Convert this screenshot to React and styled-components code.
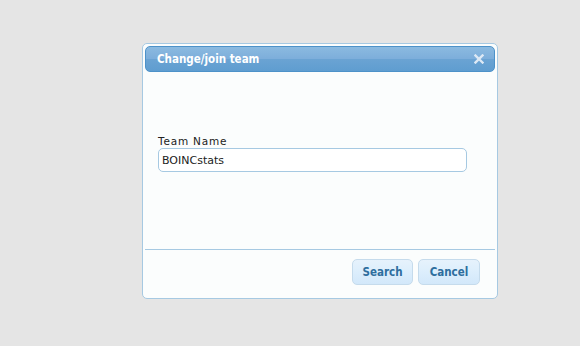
import React from "react";
import styled, { createGlobalStyle } from "styled-components";

const Global = createGlobalStyle`
  html, body { margin: 0; padding: 0; }
  body { background: #e5e5e5; width: 580px; height: 346px; overflow: hidden; font-family: "DejaVu Sans", Verdana, sans-serif; }
`;

const Page = styled.div`
  padding: 43px 0 0 142px;
`;

const Dialog = styled.div`
  box-sizing: border-box;
  width: 356px;
  height: 256px;
  border: 1px solid #a6c9e2;
  border-radius: 5px;
  background: #fbfdfd;
  padding: 2px;
  display: flex;
  flex-direction: column;
`;

const TitleBar = styled.div`
  box-sizing: border-box;
  height: 26px;
  border: 1px solid #4d92c9;
  border-radius: 5px;
  background: linear-gradient(to bottom, #8bbae0 0%, #7daedb 48%, #6aa3d3 52%, #5f9dd0 100%);
  display: flex;
  align-items: center;
  justify-content: space-between;
  padding: 0 10px 0 11px;
`;

const Title = styled.span`
  color: #ffffff;
  font-family: "DejaVu Sans Condensed", "DejaVu Sans", sans-serif;
  font-weight: bold;
  font-size: 11.5px;
`;

const Close = styled.svg`
  width: 10px;
  height: 10px;
`;

const Content = styled.div`
  flex: 1;
  padding: 63px 0 0 13px;
  display: flex;
  flex-direction: column;
`;

const Label = styled.label`
  font-size: 10.5px;
  color: #222;
  letter-spacing: 0.8px;
  line-height: 12px;
  margin-bottom: 1px;
`;

const Input = styled.input`
  box-sizing: border-box;
  width: 309px;
  height: 24px;
  border: 1px solid #a6c9e2;
  border-radius: 5px;
  background: #fff;
  font-family: "DejaVu Sans", Verdana, sans-serif;
  font-size: 11px;
  color: #222;
  padding: 0 0 0 3px;
  outline: none;
`;

const ButtonPane = styled.div`
  border-top: 1px solid #a6c9e2;
  display: flex;
  justify-content: flex-end;
  gap: 5px;
  padding: 9px 15px 11px 0;
`;

const Button = styled.button`
  box-sizing: border-box;
  width: ${(p) => p.w}px;
  height: 26px;
  border: 1px solid #c5dbec;
  border-radius: 5px;
  background: linear-gradient(to bottom, #e6f2fc 0%, #dceefc 50%, #d2e8fa 100%);
  color: #2e6e9e;
  font-family: "DejaVu Sans Condensed", "DejaVu Sans", sans-serif;
  font-weight: bold;
  font-size: 11.5px;
  padding: 0;
  cursor: pointer;
`;

export default function App() {
  return (
    <>
      <Global />
      <Page>
        <Dialog>
          <TitleBar>
            <Title>Change/join team</Title>
            <Close viewBox="0 0 10 10">
              <path d="M1.5 1.5 L8.5 8.5 M8.5 1.5 L1.5 8.5" stroke="#dde9f5" strokeWidth="2.4" strokeLinecap="square" />
            </Close>
          </TitleBar>
          <Content>
            <Label>Team Name</Label>
            <Input defaultValue="BOINCstats" />
          </Content>
          <ButtonPane>
            <Button w={61}>Search</Button>
            <Button w={62}>Cancel</Button>
          </ButtonPane>
        </Dialog>
      </Page>
    </>
  );
}
